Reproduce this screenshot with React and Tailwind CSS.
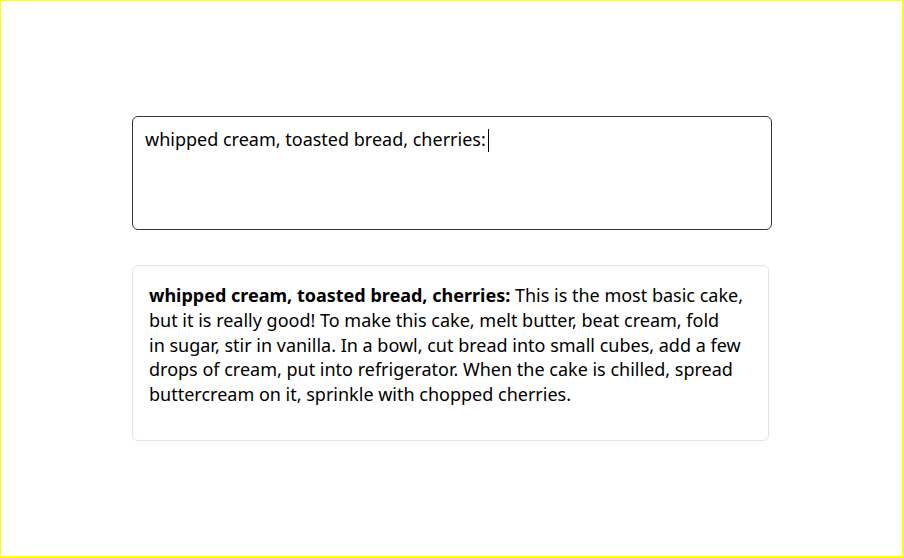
export default function App() {
  return (
    <div className="w-[904px] h-[558px] border-t-[1.5px] border-l-[1.5px] border-r-2 border-b-2 border-[#ffff00] bg-white box-border" style={{ fontFamily: '"Noto Sans", sans-serif' }}>
      <div className="pl-[131px] pt-[115px] flex flex-col">
        <div className="w-[640px] h-[114px] border border-[#333333] rounded-[6px] px-[12px] pt-[10px] text-[18px] leading-[24px] text-black whitespace-nowrap">
          whipped cream, toasted bread, cherries:<span className="inline-block w-[1px] h-[23px] bg-black align-[-6px] ml-[2px]"></span>
        </div>
        <div className="mt-[35px] w-[637px] h-[176px] border border-[#e3e3e3] rounded-[6px] px-[16px] pt-[17px] text-[18px] leading-[24.75px] text-black whitespace-nowrap">
          <span className="font-bold">whipped cream, toasted bread, cherries:</span> This is the most basic cake,<br />
          but it is really good! To make this cake, melt butter, beat cream, fold<br />
          in sugar, stir in vanilla. In a bowl, cut bread into small cubes, add a few<br />
          drops of cream, put into refrigerator. When the cake is chilled, spread<br />
          buttercream on it, sprinkle with chopped cherries.
        </div>
      </div>
    </div>
  );
}
